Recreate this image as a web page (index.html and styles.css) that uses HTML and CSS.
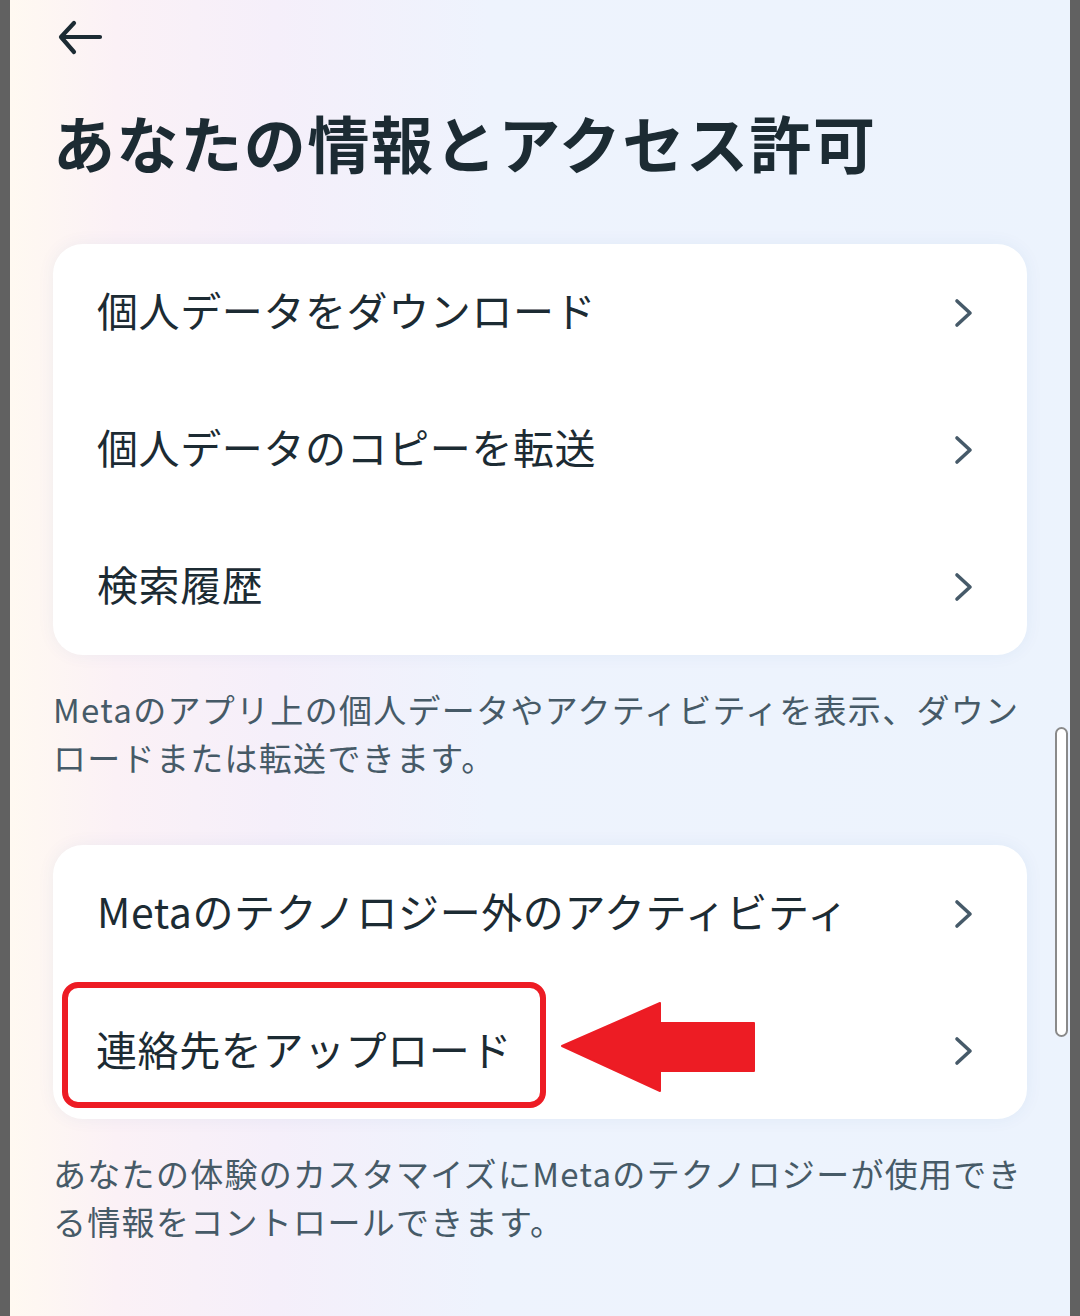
FILE: index.html
```html
<!DOCTYPE html>
<html lang="ja">
<head>
  <meta charset="utf-8">
  <title>あなたの情報とアクセス許可</title>
  <link rel="stylesheet" href="styles.css">
</head>
<body>
  <div class="screen">
    <div class="topbar">
      <svg class="back" width="48" height="40" viewBox="0 0 48 40">
        <path d="M7 18 H45 M19 4 L6 18 L19 33" fill="none" stroke="#1c2b33" stroke-width="4.2" stroke-linecap="round" stroke-linejoin="round"/>
      </svg>
    </div>

    <h1 class="title">あなたの情報とアクセス許可</h1>

    <div class="card">
      <div class="row">
        <span class="label">個人データをダウンロード</span>
        <svg class="chev" width="22" height="30" viewBox="0 0 22 30"><path d="M4 3 L17 15 L4 27" /></svg>
      </div>
      <div class="row">
        <span class="label">個人データのコピーを転送</span>
        <svg class="chev" width="22" height="30" viewBox="0 0 22 30"><path d="M4 3 L17 15 L4 27" /></svg>
      </div>
      <div class="row">
        <span class="label">検索履歴</span>
        <svg class="chev" width="22" height="30" viewBox="0 0 22 30"><path d="M4 3 L17 15 L4 27" /></svg>
      </div>
    </div>
    <p class="note">Metaのアプリ上の個人データやアクティビティを表示、ダウンロードまたは転送できます。</p>

    <div class="card second">
      <div class="row">
        <span class="label">Metaのテクノロジー外のアクティビティ</span>
        <svg class="chev" width="22" height="30" viewBox="0 0 22 30"><path d="M4 3 L17 15 L4 27" /></svg>
      </div>
      <div class="row">
        <span class="label marked">連絡先をアップロード</span>
        <svg class="pointer" width="196" height="92" viewBox="0 0 196 92">
          <path d="M2 45 L100 2 L100 22 L194 22 L194 70 L100 70 L100 90 Z" fill="#ed1c24" stroke="#ed1c24" stroke-width="2" stroke-linejoin="round"/>
        </svg>
        <svg class="chev" width="22" height="30" viewBox="0 0 22 30"><path d="M4 3 L17 15 L4 27" /></svg>
      </div>
    </div>
    <p class="note">あなたの体験のカスタマイズにMetaのテクノロジーが使用できる情報をコントロールできます。</p>

    <div class="scrollbar"></div>
  </div>
</body>
</html>
```

FILE: styles.css
```css
html, body {
  margin: 0;
  padding: 0;
}

body {
  background-color: #616161;
  font-family: "Noto Sans CJK JP", "Noto Sans", sans-serif;
  color: #1c2b33;
}

.screen {
  position: relative;
  margin: 0 10px;
  height: 1316px;
  padding: 0 43px;
  box-sizing: border-box;
  background:
    linear-gradient(to right, #fff9f1 0%, #fbf1f6 10%, #f5effa 25%, #eef3fd 45%, #ecf3fd 100%);
  overflow: hidden;
}

.topbar {
  height: 78px;
  display: flex;
  align-items: center;
}

.back {
  display: block;
  margin-left: 2px;
  margin-top: 0;
}

.title {
  margin: 17px 0 55px 0;
  font-size: 62px;
  line-height: 94px;
  font-weight: 700;
  letter-spacing: 1.6px;
}

.card {
  background-color: #fff;
  border-radius: 30px;
  box-shadow: 0 0 18px rgba(40, 90, 160, 0.06);
}

.row {
  height: 137px;
  display: flex;
  align-items: center;
  padding: 0 52px 0 44px;
  position: relative;
}

.label {
  flex: 1;
  font-size: 41px;
  line-height: 1;
  letter-spacing: 0.6px;
  margin-top: -6px;
}

.chev {
  display: block;
  fill: none;
  stroke: #465a69;
  stroke-width: 3.6;
  stroke-linecap: round;
  stroke-linejoin: round;
}

.note {
  margin: 30px 0 64px 0;
  font-size: 33px;
  line-height: 48px;
  color: #465a67;
  letter-spacing: 1.3px;
}

.marked {
  flex: none;
  padding: 6px 28px 0 28px;
  margin-left: -35px;
  height: 108px;
  display: flex;
  align-items: center;
  border: 6px solid #ed1c24;
  border-radius: 16px;
  margin-top: -11px;
}

.pointer {
  display: block;
  margin-left: 14px;
  margin-right: auto;
  margin-top: -8px;
}

.scrollbar {
  position: absolute;
  right: 2px;
  top: 727px;
  width: 9px;
  height: 306px;
  border: 2px solid #8a8a8a;
  border-radius: 8px;
  background-color: #fff;
}
```
